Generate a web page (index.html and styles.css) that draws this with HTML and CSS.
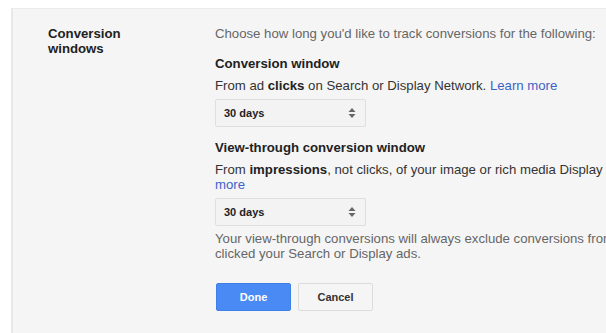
FILE: index.html
```html
<!DOCTYPE html>
<html lang="en">
<head>
  <meta charset="UTF-8">
  <title>Conversion windows</title>
  <link rel="stylesheet" href="styles.css">
</head>
<body>
  <div class="panel">
    <div class="label">Conversion windows</div>

    <div class="content">
      <p class="intro">Choose how long you'd like to track conversions for the following:</p>

      <!-- Click-through window -->
      <div class="heading">Conversion window</div>
      <p class="desc">From ad <b>clicks</b> on Search or Display Network. <a href="#">Learn more</a></p>
      <div class="select-wrap">
        <select class="select">
          <option>30 days</option>
        </select>
        <svg class="arrows" width="8" height="12" viewBox="0 0 8 12">
          <path d="M4 1 L7.5 5 L0.5 5 Z" fill="#666"/>
          <path d="M4 11 L7.5 7 L0.5 7 Z" fill="#666"/>
        </svg>
      </div>

      <!-- View-through window -->
      <div class="heading heading-2">View-through conversion window</div>
      <p class="desc">From <b>impressions</b>, not clicks, of your image or rich media Display ads. <a href="#">Learn more</a></p>
      <div class="select-wrap">
        <select class="select">
          <option>30 days</option>
        </select>
        <svg class="arrows" width="8" height="12" viewBox="0 0 8 12">
          <path d="M4 1 L7.5 5 L0.5 5 Z" fill="#666"/>
          <path d="M4 11 L7.5 7 L0.5 7 Z" fill="#666"/>
        </svg>
      </div>
      <p class="note">Your view-through conversions will always exclude conversions from people who clicked your Search or Display ads.</p>

      <div class="buttons">
        <button class="btn btn-done">Done</button>
        <button class="btn btn-cancel">Cancel</button>
      </div>
    </div>
  </div>
</body>
</html>
```

FILE: styles.css
```css
body {
  margin: 0;
  background: #ffffff;
  font-family: "Liberation Sans", Arial, sans-serif;
  font-size: 13.2px;
  line-height: 15px;
  overflow: hidden;
  height: 333px;
}

.panel {
  display: flex;
  margin: 8px 0 0 11px;
  padding: 17px 0 40px 35px;
  width: 760px;
  height: 400px;
  background: #f5f5f5;
  border-top: 1px solid #ebebeb;
  border-left: 2px solid #e8e8e8;
}

.label {
  width: 125px;
  margin-right: 42px;
  flex-shrink: 0;
  font-weight: bold;
  color: #222;
}

.content {
  width: 485px;
  flex-shrink: 0;
}

p {
  margin: 0;
}

.intro {
  color: #666;
}

.heading {
  margin-top: 15px;
  font-weight: bold;
  color: #222;
}

.heading-2 {
  margin-top: 13px;
}

.desc {
  margin-top: 7px;
  color: #333;
}

.desc b {
  color: #222;
}

a {
  color: #3b63c7;
  text-decoration: none;
}

.select-wrap {
  position: relative;
  width: 151px;
  margin-top: 6px;
}

.select {
  appearance: none;
  -webkit-appearance: none;
  display: block;
  width: 151px;
  height: 28px;
  padding: 0 8px;
  border: 1px solid #dfdfdf;
  border-radius: 2px;
  background: #f3f3f3;
  font-family: "Liberation Sans", Arial, sans-serif;
  font-size: 11px;
  font-weight: bold;
  color: #222;
  outline: none;
}

.arrows {
  position: absolute;
  right: 10px;
  top: 8px;
  pointer-events: none;
}

.note {
  margin-top: 5px;
  color: #666;
}

.buttons {
  display: flex;
  gap: 7px;
  margin-top: 22px;
  padding-left: 1px;
}

.btn {
  width: 75px;
  height: 28px;
  border-radius: 2px;
  font-family: "Liberation Sans", Arial, sans-serif;
  font-size: 11px;
  font-weight: bold;
  cursor: pointer;
}

.btn-done {
  background: #4a8af4;
  border: 1px solid #3f7fe8;
  color: #fff;
}

.btn-cancel {
  background: #f5f5f5;
  border: 1px solid #dcdcdc;
  color: #333;
}
```
